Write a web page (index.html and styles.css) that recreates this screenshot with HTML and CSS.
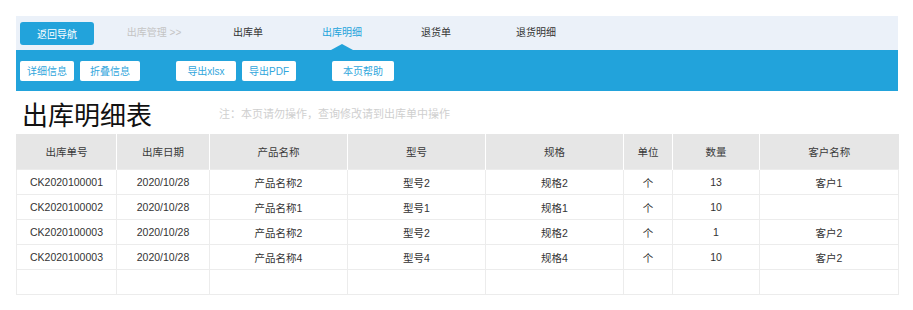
FILE: index.html
```html
<!DOCTYPE html>
<html lang="zh-CN">
<head>
  <meta charset="UTF-8">
  <title>出库明细表</title>
  <link rel="stylesheet" href="styles.css">
</head>
<body>
  <div class="page">
    <div class="nav">
      <a class="back-btn">返回导航</a>
      <span class="nav-link muted">出库管理 &gt;&gt;</span>
      <a class="nav-link">出库单</a>
      <a class="nav-link active">出库明细</a>
      <a class="nav-link">退货单</a>
      <a class="nav-link wide">退货明细</a>
    </div>

    <div class="toolbar">
      <div class="tool-group">
        <button class="tool-btn narrow">详细信息</button>
        <button class="tool-btn">折叠信息</button>
      </div>
      <div class="tool-group">
        <button class="tool-btn">导出xlsx</button>
        <button class="tool-btn narrow">导出PDF</button>
      </div>
      <div class="tool-group">
        <button class="tool-btn wide">本页帮助</button>
      </div>
    </div>

    <div class="title-row">
      <h1>出库明细表</h1>
      <span class="note">注：本页请勿操作，查询修改请到出库单中操作</span>
    </div>

    <table class="grid">
      <colgroup>
        <col class="c-no">
        <col class="c-date">
        <col class="c-name">
        <col class="c-model">
        <col class="c-spec">
        <col class="c-unit">
        <col class="c-qty">
        <col class="c-client">
      </colgroup>
      <thead>
        <tr>
          <th>出库单号</th>
          <th>出库日期</th>
          <th>产品名称</th>
          <th>型号</th>
          <th>规格</th>
          <th>单位</th>
          <th>数量</th>
          <th>客户名称</th>
        </tr>
      </thead>
      <tbody>
        <tr>
          <td>CK2020100001</td><td>2020/10/28</td><td>产品名称2</td><td>型号2</td>
          <td>规格2</td><td>个</td><td>13</td><td>客户1</td>
        </tr>
        <tr>
          <td>CK2020100002</td><td>2020/10/28</td><td>产品名称1</td><td>型号1</td>
          <td>规格1</td><td>个</td><td>10</td><td></td>
        </tr>
        <tr>
          <td>CK2020100003</td><td>2020/10/28</td><td>产品名称2</td><td>型号2</td>
          <td>规格2</td><td>个</td><td>1</td><td>客户2</td>
        </tr>
        <tr>
          <td>CK2020100003</td><td>2020/10/28</td><td>产品名称4</td><td>型号4</td>
          <td>规格4</td><td>个</td><td>10</td><td>客户2</td>
        </tr>
        <tr class="empty">
          <td></td><td></td><td></td><td></td><td></td><td></td><td></td><td></td>
        </tr>
      </tbody>
    </table>
  </div>
</body>
</html>
```

FILE: styles.css
```css
body {
  margin: 0;
  padding: 0;
  font-family: 'Liberation Sans', 'Noto Sans CJK SC', sans-serif;
  font-size: 11px;
  color: #333;
  background-color: #fff;
}
.page {
  padding: 16px 15px 0 16px;
}
.nav {
  display: flex;
  align-items: center;
  height: 34px;
  padding-left: 4px;
  background-color: #ebf1f9;
}
.back-btn {
  display: flex;
  align-items: center;
  justify-content: center;
  width: 74px;
  height: 23px;
  margin-right: 13px;
  border-radius: 3px;
  background-color: #22a3db;
  color: #fff;
  font-size: 10px;
}
.nav-link {
  position: relative;
  width: 94px;
  height: 34px;
  line-height: 34px;
  text-align: center;
  color: #333;
  font-size: 10px;
}
.nav-link.wide {
  width: 106px;
}
.nav-link.muted {
  color: #c4c4c4;
}
.nav-link.active {
  color: #22a3db;
}
.nav-link.active::after {
  content: '';
  position: absolute;
  left: 50%;
  bottom: 0;
  margin-left: -11px;
  border-left: 11px solid transparent;
  border-right: 11px solid transparent;
  border-bottom: 6px solid #22a3db;
}
.toolbar {
  display: flex;
  align-items: center;
  gap: 36px;
  height: 41px;
  padding-left: 4px;
  background-color: #22a3db;
}
.tool-group {
  display: flex;
  gap: 6px;
}
.tool-btn {
  width: 60px;
  height: 20px;
  padding: 0;
  border: none;
  border-radius: 2px;
  background-color: #fff;
  color: #2fa6dc;
  font-family: inherit;
  font-size: 10px;
  cursor: pointer;
}
.tool-btn.narrow {
  width: 54px;
}
.tool-btn.wide {
  width: 62px;
}
.title-row {
  display: flex;
  align-items: center;
  height: 43px;
  padding-left: 6px;
}
h1 {
  margin: 2px 0 0;
  font-size: 26px;
  font-weight: normal;
  color: #111;
}
.note {
  margin-left: 67px;
  color: #cfcfcf;
  font-size: 11px;
}
.grid {
  width: 882px;
  border-collapse: collapse;
  table-layout: fixed;
  font-size: 10.5px;
}
.c-no { width: 100px; }
.c-date { width: 93px; }
.c-name { width: 138px; }
.c-model { width: 138px; }
.c-spec { width: 138px; }
.c-unit { width: 49px; }
.c-qty { width: 87px; }
.c-client { width: 139px; }
.grid th {
  height: 35px;
  padding: 0;
  background-color: #e6e6e6;
  border-left: 1px solid #fff;
  font-weight: normal;
  color: #3a3a3a;
}
.grid th:first-child {
  border-left-color: #e6e6e6;
}
.grid td {
  height: 24px;
  padding: 0;
  text-align: center;
  border: 1px solid #ececec;
  color: #333;
}
```
